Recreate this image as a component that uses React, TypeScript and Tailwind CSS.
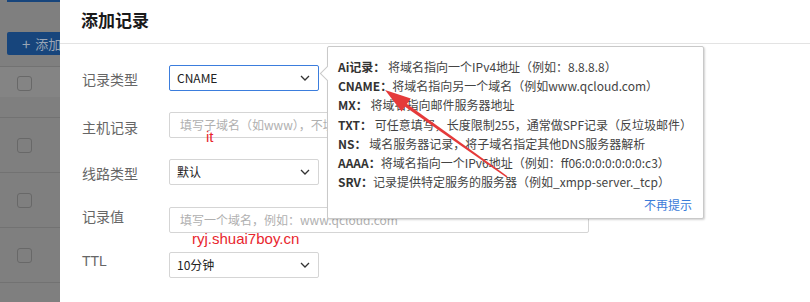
import React from "react";

const cjk = { fontFamily: '"Noto Sans CJK SC", "Noto Sans", sans-serif' };

function Chevron() {
  return (
    <svg width="10" height="6" viewBox="0 0 10 6" className="shrink-0">
      <path d="M1 1 L5 5 L9 1" fill="none" stroke="#333" strokeWidth="1.3" />
    </svg>
  );
}

function Select({ value, active }: { value: string; active?: boolean }) {
  return (
    <div
      className={`flex h-[26px] w-[150px] items-center justify-between rounded-[2px] border pl-[7px] pr-[8px] text-[12px] text-[#222] ${
        active ? "border-[#3b7ddd]" : "border-[#d5d5d5]"
      }`}
    >
      <span>{value}</span>
      <Chevron />
    </div>
  );
}

function Input({ placeholder }: { placeholder: string }) {
  return (
    <div className="flex h-[26px] w-[420px] items-center rounded-[2px] border border-[#d5d5d5] pl-[10px] text-[12px] text-[#b0b0b0]">
      {placeholder}
    </div>
  );
}

function Checkbox() {
  return <div className="h-[15px] w-[15px] rounded-[3px] border border-[#686868]" />;
}

const tipLines: [string, string][] = [
  ["Ai记录：", " 将域名指向一个IPv4地址（例如：8.8.8.8）"],
  ["CNAME：", "将域名指向另一个域名（例如www.qcloud.com）"],
  ["MX：", " 将域名指向邮件服务器地址"],
  ["TXT：", " 可任意填写，长度限制255，通常做SPF记录（反垃圾邮件）"],
  ["NS：", " 域名服务器记录，将子域名指定其他DNS服务器解析"],
  ["AAAA：", "将域名指向一个IPv6地址（例如：ff06:0:0:0:0:0:0:c3）"],
  ["SRV：", "记录提供特定服务的服务器（例如_xmpp-server._tcp）"],
];

export default function App() {
  return (
    <div className="relative flex h-[302px] w-[810px] overflow-hidden bg-white" style={cjk}>
      {/* left dimmed page */}
      <div className="flex w-[60px] shrink-0 flex-col bg-[#7f7f7f]">
        <div className="ml-[7px] h-[2px] bg-[#17457c]" />
        <div className="ml-[7px] mt-[30px] flex h-[26px] items-center overflow-hidden whitespace-nowrap rounded-l-[2px] bg-[#17457c] pl-[15px] text-[13px] text-[#9aa6b6]">
          <span className="mr-[5px] text-[15px] leading-none">+</span>添加
        </div>
        <div className="mt-[11px] flex flex-col">
          <div className="flex h-[31px] items-start border-t border-[#727272] bg-[#848484] pl-[17px] pt-[9px]">
            <Checkbox />
          </div>
          <div className="h-[20px]" />
          {[0, 1, 2].map((i) => (
            <div key={i} className="flex h-[55px] items-center border-t border-[#727272] pl-[17px]">
              <Checkbox />
            </div>
          ))}
          <div className="h-[20px] border-t border-[#727272]" />
        </div>
      </div>

      {/* modal */}
      <div className="relative flex flex-1 flex-col">
        <div className="h-[44px] border-b border-[#e3e3e3] pl-[21px] pt-[9px] text-[17px] font-bold leading-[22px] text-[#1a1a1a]">
          添加记录
        </div>
        <div className="flex flex-col gap-[21px] pl-[22px] pt-[21px] text-[14px] leading-[20px] text-[#666]">
          <div className="flex items-start">
            <div className="mt-[4px] w-[87px]">记录类型</div>
            <Select value="CNAME" active />
          </div>
          <div className="flex items-start">
            <div className="mt-[5px] w-[87px]">主机记录</div>
            <Input placeholder="填写子域名（如www），不填写默认为@" />
          </div>
          <div className="flex items-start">
            <div className="mt-[4px] w-[87px]">线路类型</div>
            <Select value="默认" />
          </div>
          <div className="mt-[1px] flex items-start">
            <div className="-mt-[1px] w-[87px]">记录值</div>
            <Input placeholder="填写一个域名，例如：www.qcloud.com" />
          </div>
          <div className="-mt-[2px] flex items-start">
            <div className="-mt-[1px] w-[87px]" style={{ fontFamily: '"Liberation Sans", sans-serif' }}>TTL</div>
            <Select value="10分钟" />
          </div>
        </div>

        {/* tooltip */}
        <div className="absolute left-[267px] top-[46px] h-[173px] w-[377px] rounded-[2px] border border-[#c9c9c9] bg-white pl-[10px] pr-[10px] pt-[10px] shadow-[1px_1px_2px_rgba(0,0,0,0.18)]">
          <div className="absolute left-[-6px] top-[21px] h-[11px] w-[11px] rotate-45 border-b border-l border-[#c9c9c9] bg-white" />
          <div className="relative text-[12px] leading-[19.2px] text-[#444]">
            {tipLines.map(([k, v]) => (
              <div key={k} className="whitespace-nowrap">
                <span className="font-bold text-[#333]">{k}</span>
                <span>{v}</span>
              </div>
            ))}
            <div className="mt-[4px] pr-[1px] text-right text-[#3a7bd9]">不再提示</div>
          </div>
        </div>
      </div>

      {/* red annotations */}
      <div
        className="absolute left-[206px] top-[127px] text-[15px] leading-[20px] text-[#e8262e]"
        style={{ fontFamily: '"Liberation Sans", sans-serif' }}
      >
        it
      </div>
      <div
        className="absolute left-[192px] top-[229px] text-[15px] leading-[20px] text-[#e8262e]"
        style={{ fontFamily: '"Liberation Sans", sans-serif' }}
      >
        ryj.shuai7boy.cn
      </div>
      <svg className="pointer-events-none absolute left-0 top-0" width="810" height="302" viewBox="0 0 810 302">
        <polygon points="385,90 410.8,98.6 401.6,111.6" fill="#e53a3a" />
        <polygon points="405.3,102.7 403.3,105.5 506.6,177.4 507.4,176.2" fill="#e53a3a" />
      </svg>
    </div>
  );
}
